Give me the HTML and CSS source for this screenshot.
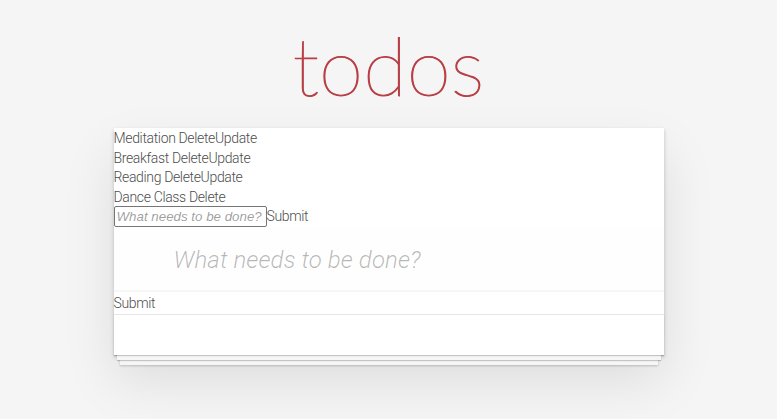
FILE: index.html
```html
<!DOCTYPE html>
<html lang="en">
<head>
<meta charset="utf-8">
<title>todos</title>
<link rel="stylesheet" href="styles.css">
</head>
<body>
<h1 class="title">todos</h1>
<section class="todoapp">
  <ul class="todo-list">
    <li>Meditation <button class="link-btn">Delete</button><button class="link-btn">Update</button></li>
    <li>Breakfast <button class="link-btn">Delete</button><button class="link-btn">Update</button></li>
    <li>Reading <button class="link-btn">Delete</button><button class="link-btn">Update</button></li>
    <li>Dance Class <button class="link-btn">Delete</button></li>
  </ul>
  <form class="add-form">
    <input class="small-input" type="text" placeholder="What needs to be done?"><button class="link-btn" type="button">Submit</button>
  </form>
  <input class="new-todo" type="text" placeholder="What needs to be done?">
  <div class="submit-row"><button class="link-btn" type="button">Submit</button></div>
  <footer class="footer"></footer>
</section>
</body>
</html>
```

FILE: styles.css
```css
html, body {
  margin: 0;
  padding: 0;
}

html {
  background: #f5f5f5;
}

body {
  min-height: 100vh;
  background: #f5f5f5;
  color: #4d4d4d;
  font-family: Roboto, "Liberation Sans", sans-serif;
  font-size: 14px;
  font-weight: 300;
  line-height: 1.4em;
  letter-spacing: -0.35px;
}

.title {
  margin: 0;
  height: 128px;
  padding-top: 9px;
  box-sizing: border-box;
  font-family: Lato, Roboto, sans-serif;
  font-size: 80px;
  font-weight: 200;
  line-height: 112px;
  letter-spacing: 0;
  text-align: center;
  color: #b83f45;
  -webkit-text-stroke: 1.1px #b83f45;
}

.todoapp {
  width: 550px;
  margin: 0 auto 40px;
  background: #fff;
  box-shadow: 0 2px 4px 0 rgba(0, 0, 0, 0.2), 0 25px 50px 0 rgba(0, 0, 0, 0.1);
}

.todo-list {
  list-style: none;
  margin: 0;
  padding: 0;
}

.todo-list li {
  height: 19.6px;
  box-sizing: border-box;
  padding-top: 1px;
}

.link-btn {
  margin: 0;
  padding: 0;
  border: 0;
  background: none;
  font: inherit;
  letter-spacing: inherit;
  color: inherit;
  vertical-align: baseline;
}

.add-form {
  display: flex;
  align-items: center;
  height: 21px;
  margin: 0;
}

.small-input {
  width: 153px;
  height: 21px;
  box-sizing: border-box;
  margin: 0;
  padding: 1px 2px;
  border: 1px solid #767676;
  border-radius: 2px;
  font-family: "Liberation Sans", Arial, sans-serif;
  font-size: 13.33px;
  letter-spacing: normal;
  color: #000;
  background: #fff;
}

.small-input::placeholder,
.new-todo::placeholder {
  font-style: italic;
  color: rgba(0, 0, 0, 0.4);
}

.small-input::placeholder {
  font-weight: 400;
}

.new-todo {
  display: block;
  width: 100%;
  height: 65px;
  box-sizing: border-box;
  margin: 0;
  padding: 16px 16px 16px 60px;
  border: none;
  outline: none;
  background: rgba(0, 0, 0, 0.003);
  box-shadow: inset 0 -2px 1px rgba(0, 0, 0, 0.03);
  font-family: Roboto, "Liberation Sans", sans-serif;
  font-size: 24px;
  font-weight: 300;
  line-height: 1.4em;
  letter-spacing: 0.1px;
  color: inherit;
}

.new-todo::placeholder {
  font-weight: 300;
  color: rgba(0, 0, 0, 0.28);
}

.submit-row {
  height: 22px;
  line-height: 22px;
}

.footer {
  height: 20px;
  padding: 10px 15px;
  border-top: 1px solid #e6e6e6;
  box-shadow: 0 1px 1px rgba(0, 0, 0, 0.2),
    0 8px 0 -3px #f6f6f6,
    0 9px 1px -3px rgba(0, 0, 0, 0.2),
    0 16px 0 -6px #f6f6f6,
    0 17px 2px -6px rgba(0, 0, 0, 0.2);
}
```
